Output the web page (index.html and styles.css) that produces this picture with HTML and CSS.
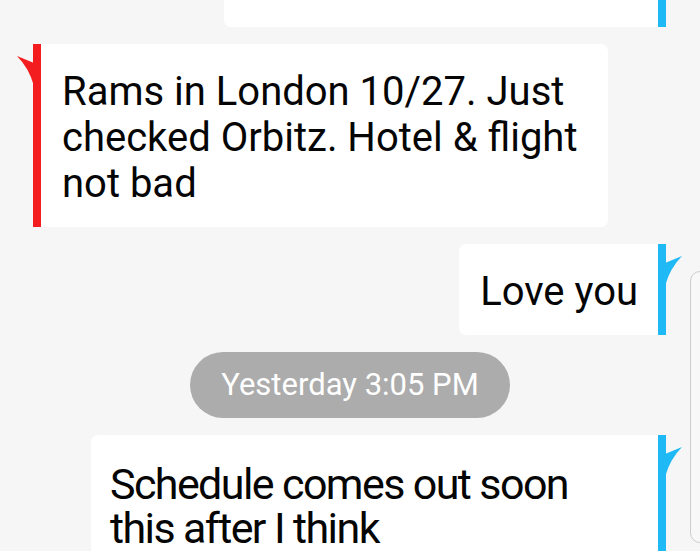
FILE: index.html
```html
<!DOCTYPE html>
<html lang="en">
<head>
<meta charset="utf-8">
<title>Messages</title>
<link rel="stylesheet" href="styles.css">
</head>
<body>
<div class="screen">
  <div class="thread">
    <div class="row out first">
      <div class="bubble">That would be so fun!!</div>
      <div class="bar blue">
        <svg class="tail tail-out" viewBox="0 0 17 30" width="17" height="30"><path d="M17 0 L0 7 L0 30 Q5 12 17 0 Z"/></svg>
      </div>
    </div>

    <div class="row in">
      <div class="bar red">
        <svg class="tail tail-in" viewBox="0 0 17 30" width="17" height="30"><path d="M0 0 L17 7 L17 30 Q12 12 0 0 Z"/></svg>
      </div>
      <div class="bubble">Rams in London 10/27. Just checked Orbitz. Hotel &amp; flight not bad</div>
    </div>

    <div class="row out">
      <div class="bubble">Love you</div>
      <div class="bar blue">
        <svg class="tail tail-out" viewBox="0 0 17 30" width="17" height="30"><path d="M17 0 L0 7 L0 30 Q5 12 17 0 Z"/></svg>
      </div>
    </div>

    <div class="row center">
      <div class="pill">Yesterday 3:05 PM</div>
    </div>

    <div class="row out">
      <div class="bubble narrow">Schedule comes out soon this after I think</div>
      <div class="bar blue">
        <svg class="tail tail-out" viewBox="0 0 17 30" width="17" height="30"><path d="M17 0 L0 7 L0 30 Q5 12 17 0 Z"/></svg>
      </div>
    </div>
  </div>
  <div class="fast-scroll"></div>
</div>
</body>
</html>
```

FILE: styles.css
```css
html, body {
  margin: 0;
  padding: 0;
}

body {
  background: #f6f6f6;
  font-family: Roboto, "Noto Sans", sans-serif;
  color: #050505;
}

.screen {
  position: relative;
  width: 700px;
  height: 551px;
  overflow: hidden;
}

.thread {
  display: flex;
  flex-direction: column;
  gap: 17px;
  margin-top: -64px;
}

.row {
  display: flex;
  align-items: stretch;
}

.row.in {
  justify-content: flex-start;
  padding-left: 33px;
}

.row.out {
  justify-content: flex-end;
  padding-right: 34px;
}

.row.center {
  justify-content: center;
}

.bubble {
  background: #ffffff;
  max-width: 567px;
  box-sizing: border-box;
  padding: 25px 20px 20px 21px;
  font-size: 40px;
  line-height: 46px;
}

.row.in .bubble {
  border-radius: 0 7px 7px 0;
}

.row.out .bubble {
  border-radius: 7px 0 0 7px;
}

.bubble.narrow {
  width: 567px;
  padding: 27px 26px 20px 19px;
  font-size: 43px;
  line-height: 44px;
  letter-spacing: -1.6px;
}

.bar {
  position: relative;
  width: 8px;
  flex: none;
}

.bar.red {
  background: #f31d1f;
}

.bar.blue {
  background: #1fb9f6;
}

.tail {
  position: absolute;
  top: 12px;
  display: block;
}

.tail-in {
  left: -16px;
  fill: #f31d1f;
}

.tail-out {
  right: -16px;
  fill: #1fb9f6;
}

.pill {
  height: 66px;
  line-height: 66px;
  padding: 0 31px;
  border-radius: 33px;
  background: #acacac;
  color: #ffffff;
  font-size: 31px;
}

.fast-scroll {
  position: absolute;
  left: 690px;
  top: 271px;
  width: 40px;
  height: 272px;
  box-sizing: border-box;
  border: 1.5px solid #cdcdcd;
  border-radius: 10px;
  background: #f8f8f8;
}
```
